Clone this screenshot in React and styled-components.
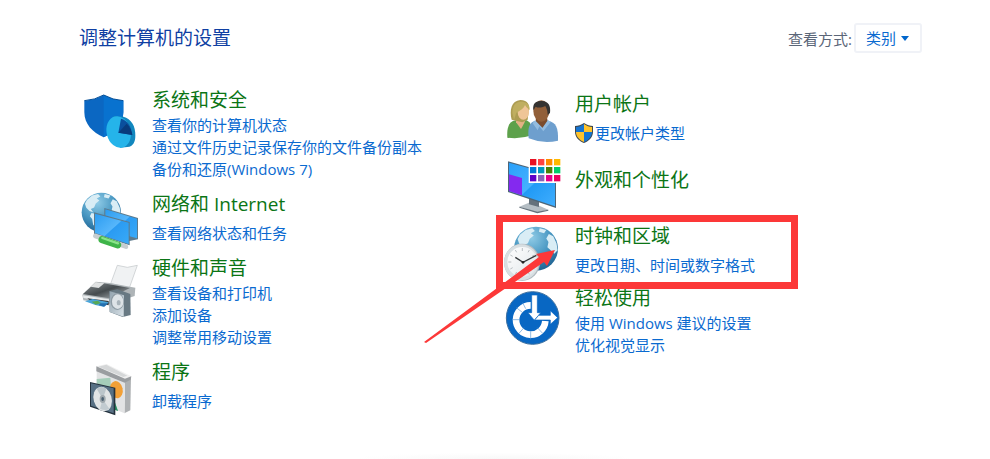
import React from 'react';
import styled, { createGlobalStyle } from 'styled-components';

const ShieldDiskIcon = () => (
  <Icon viewBox="27 3 180 198" aria-hidden="true">
    <path d="M43 47 Q75 45 101 30 Q128 45 160 47 V82 C160 118 134 142 101 157 C68 142 43 118 43 82Z" fill="#0b67c2" />
    <path d="M101 30 Q128 45 160 47 V82 C160 118 134 142 101 157Z" fill="#0872cf" />
    <path d="M43 47 Q75 45 101 30 Q128 45 160 47" fill="none" stroke="#075098" strokeWidth="3" />
    <path d="M130 93 L160 95 C184 102 197 122 196 152 C196 170 190 184 172 186 L150 188Z" fill="#1287be" />
    <ellipse cx="146" cy="141" rx="36" ry="48" transform="rotate(-14 146 141)" fill="#25b4ea" />
    <path d="M145 143 L153 101 C172 106 183 122 187 150Z" fill="#0a4f9d" />
    <path d="M145 143 L170 116 C180 126 185 138 187 150Z" fill="#083b7c" />
  </Icon>
);

const Globe = ({ cx, cy, r, id }) => (
  <g>
    <defs>
      <radialGradient id={id} cx="0.4" cy="0.25" r="0.8">
        <stop offset="0" stopColor="#8fcbe6" />
        <stop offset="0.55" stopColor="#4796c1" />
        <stop offset="1" stopColor="#1c5f8f" />
      </radialGradient>
    </defs>
    <circle cx={cx} cy={cy} r={r} fill={`url(#${id})`} />
    <g transform={`translate(${cx} ${cy}) scale(${r / 60})`} fill="#d9edf5">
      <path d="M-44 -38 L-28 -51 L-10 -56 L-3 -48 L-14 -42 L-6 -36 L-17 -27 L-22 -15 L-32 -10 L-25 0 L-36 -4 L-46 -14 L-50 -26Z" />
      <path d="M-30 2 L-12 6 L-3 16 L-12 28 L-18 45 L-25 38 L-28 20 L-35 12Z" />
      <path d="M10 -56 L28 -51 L22 -42 L8 -46Z" />
      <path d="M35 -40 L47 -34 L56 -15 L59 4 L50 14 L40 4 L31 -4 L34 -18 L28 -28Z" />
    </g>
  </g>
);

const NetworkIcon = () => (
  <Icon viewBox="27 15 180 198" aria-hidden="true">
    <defs>
      <linearGradient id="netScreen" x1="0" y1="0" x2="1" y2="1">
        <stop offset="0" stopColor="#2b9cf0" />
        <stop offset="0.5" stopColor="#56b6fb" />
        <stop offset="0.52" stopColor="#2b9bf2" />
        <stop offset="1" stopColor="#38aaf8" />
      </linearGradient>
    </defs>
    <Globe cx={94} cy={82} r={59} id="netGlobe" />
    <path d="M103 69 L204 99 V163 L178 168 L103 144Z" fill="#5c7a8c" />
    <path d="M106 73 L201 101 V160 L106 134Z" fill="url(#netScreen)" />
    <path d="M72 82 L179 111 V181 L72 146Z" fill="#5c7a8c" />
    <path d="M75 86 L176 113 V177 L75 144Z" fill="url(#netScreen)" />
    <path d="M76 153 L168 185" stroke="#c6cdd0" strokeWidth="14" strokeLinecap="round" />
    <path d="M96 164 L143 180" stroke="#3fb449" strokeWidth="21" strokeLinecap="round" />
    <path d="M97 159 L144 175" stroke="#8ae389" strokeWidth="7" strokeLinecap="round" />
  </Icon>
);

const PrinterIcon = () => (
  <Icon viewBox="27 -3 180 198" aria-hidden="true">
    <defs>
      <linearGradient id="printerTop" x1="0" y1="0" x2="1" y2="1">
        <stop offset="0" stopColor="#8d9496" />
        <stop offset="0.5" stopColor="#454b4e" />
        <stop offset="1" stopColor="#b7bdc0" />
      </linearGradient>
      <linearGradient id="speakerFace" x1="0" y1="0" x2="1" y2="1">
        <stop offset="0" stopColor="#93a4af" />
        <stop offset="1" stopColor="#d9e2e8" />
      </linearGradient>
    </defs>
    <path d="M142 31 L172 37 L202 31 L178 99 L122 86Z" fill="#f0f2f3" stroke="#bfc4c7" strokeWidth="2" />
    <path d="M37 119 L77 80 L120 84 L196 98 L194 123 L120 148 L40 136Z" fill="#aeb4b7" />
    <path d="M39 117 L79 81 L180 99 L117 130Z" fill="url(#printerTop)" />
    <path d="M62 95 L77 81 L103 85 L86 99Z" fill="#e0e2e2" />
    <path d="M39 121 L117 133 V141 L40 129Z" fill="#e8ebec" />
    <path d="M52 130 L116 138 V151 L65 140Z" fill="#33383b" />
    <path d="M45 139 L68 132 L116 142 L101 155 L76 150Z" fill="#4aa4d8" />
    <path d="M65 140 L83 137 L93 144 L77 149Z" fill="#58a955" />
    <path d="M90 145 L115 145 L103 155 L87 151Z" fill="#256fae" />
    <path d="M118 108 L142 103 L181 117 L182 180 L158 186 L119 171Z" fill="#687983" />
    <path d="M119 109 L162 121 L161 185 L119 171Z" fill="url(#speakerFace)" />
    <ellipse cx="142" cy="140" rx="20" ry="25" fill="#8d9ba4" />
    <ellipse cx="143" cy="140" rx="17" ry="22" fill="#dde3e7" />
    <ellipse cx="146" cy="143" rx="6" ry="8" fill="#a9b4bb" />
  </Icon>
);

const ProgramsIcon = () => (
  <Icon viewBox="27 9 180 198" aria-hidden="true">
    <path d="M165 78 L183 66 L181 166 L163 175Z" fill="#aeb1b3" />
    <path d="M80 43 L165 75 L164 175 L80 142Z" fill="#e2e3e4" />
    <path d="M80 72 L121 68 L124 110 L144 168 L120 158 L80 130Z" fill="#a5cdb9" />
    <path d="M134 140 L144 168 L134 164Z" fill="#289361" />
    <ellipse cx="139" cy="104" rx="19" ry="26" transform="rotate(-12 139 104)" fill="#f2a037" />
    <path d="M79 34 L110 27 L184 64 L165 77Z" fill="#f0f0f0" />
    <path d="M79 34 L165 71 L184 64 L182 74 L164 83 L79 49Z" fill="#9a9da0" />
    <path d="M85 35 L109 29 L172 62 L160 66Z" fill="#d5d7d8" />
    <path d="M60 81 L136 98 V181 L60 155Z" fill="#24313c" />
    <path d="M63 85 L131 100 V175 L63 152Z" fill="#577084" />
    <ellipse cx="98" cy="132" rx="27" ry="37" transform="rotate(-16 98 132)" fill="#e1e4e5" />
    <path d="M98 132 L80 101 Q94 91 109 101Z" fill="#bbc5ca" />
    <path d="M98 132 L118 161 Q107 169 90 161Z" fill="#c2cbd0" />
    <ellipse cx="98" cy="132" rx="9" ry="12" fill="#9fa8ad" />
    <ellipse cx="98" cy="132" rx="4" ry="6" fill="#4c6172" />
  </Icon>
);

const UsersIcon = () => (
  <Icon viewBox="21 15 180 198" aria-hidden="true">
    <path d="M37 158 C35 125 42 110 62 106 L95 106 C108 113 112 125 112 151 Q75 163 37 158Z" fill="#5da14b" />
    <path d="M64 102 L92 102 L88 114 L78 132 L63 112Z" fill="#e3b184" />
    <path d="M50 104 C43 76 49 47 76 45 C99 45 106 61 101 79 L98 104 L82 112Z" fill="#ad9c52" />
    <ellipse cx="85" cy="81" rx="17" ry="23" fill="#efc597" />
    <path d="M64 83 C75 77 86 71 90 60 C95 70 101 72 104 75 C105 54 89 49 76 50 C61 51 53 62 52 83 L57 105Z" fill="#bfae60" />
    <path d="M101 160 C97 126 104 110 123 107 H158 C184 112 190 127 189 167 Q145 178 101 160Z" fill="#6e9fce" />
    <path d="M123 98 H156 L158 109 L144 130 L122 109Z" fill="#7b4c2d" />
    <path d="M120 106 L142 129 L159 105 L167 111 L145 139 L133 124 L128 136 L113 115Z" fill="#93bce0" />
    <ellipse cx="139" cy="78" rx="24" ry="32" fill="#925f39" />
    <path d="M115 76 C112 55 122 48 141 48 C160 49 168 62 165 84 L158 90 C158 74 153 68 151 63 C137 70 126 68 122 65Z" fill="#353331" />
  </Icon>
);

const tiles = [
  ['#e81123', '#ff4343', '#ff8c00', '#ffb900'],
  ['#0078d7', '#0099bc', '#498205', '#00cc6a'],
  ['#5c00c7', '#8764b8', '#e3008c', '#ea005e'],
];

const AppearanceIcon = () => (
  <Icon viewBox="21 201 180 198" aria-hidden="true">
    <defs>
      <linearGradient id="deskScreen" x1="0" y1="0" x2="1" y2="1">
        <stop offset="0" stopColor="#29a0fa" />
        <stop offset="0.5" stopColor="#45b1ff" />
        <stop offset="0.52" stopColor="#219af5" />
        <stop offset="1" stopColor="#40aefe" />
      </linearGradient>
    </defs>
    <path d="M73 365 L107 351 L160 374 L127 383Z" fill="#b5bec4" />
    <path d="M73 365 L127 380 L160 374 V377 L127 385 L73 368Z" fill="#65717b" />
    <path d="M102 335 L132 345 V366 L102 358Z" fill="#65717b" />
    <path d="M39 229 L183 269 V369 L39 321Z" fill="#4d6577" />
    <path d="M42 233 L180 271 V364 L42 318Z" fill="url(#deskScreen)" />
    <path d="M42 268 L81 279 V331 L42 318Z" fill="#8429ef" />
    <path d="M101 218 H200 V294 H101Z" fill="#fff" />
    {tiles.map((row, y) =>
      row.map((color, x) => (
        <rect key={color} x={105 + x * 24} y={222 + y * 24} width="19" height="19" fill={color} />
      ))
    )}
  </Icon>
);

const ClockIcon = () => (
  <Icon viewBox="36 51 180 198" aria-hidden="true">
    <defs>
      <linearGradient id="clockFace" x1="0" y1="0" x2="1" y2="1">
        <stop offset="0" stopColor="#ffffff" />
        <stop offset="1" stopColor="#dfe5e8" />
      </linearGradient>
    </defs>
    <Globe cx={138} cy={131} r={66} id="clockGlobe" />
    <ellipse cx="96" cy="172" rx="54" ry="56" fill="#b1bbc0" />
    <ellipse cx="94" cy="172" rx="52" ry="54" fill="#d8dfe2" />
    <circle cx="97" cy="171" r="45" fill="url(#clockFace)" />
    <g stroke="#9aa3a8" strokeWidth="2">
      <path d="M97 129 V138 M97 205 V214 M55 171 H64 M130 171 H139" />
      <path d="M76 135 L80 142 M118 135 L114 142 M61 150 L68 154 M133 150 L126 154" />
      <path d="M61 192 L68 188 M133 192 L126 188 M76 208 L80 201 M118 208 L114 201" />
    </g>
    <path d="M76 157 L99 172 L139 151" fill="none" stroke="#34393c" strokeWidth="4" />
    <circle cx="99" cy="172" r="4" fill="#222" />
  </Icon>
);

const EaseIcon = () => (
  <Icon viewBox="261 132 180 198" aria-hidden="true">
    <circle cx="353" cy="234" r="79" fill="#0867c3" stroke="#3b6e9e" strokeWidth="3" />
    <path d="M347 196 A44 44 0 1 0 391 243" fill="none" stroke="#fff" strokeWidth="20" />
    <path
      d="M347 274 V298 M291 239 H314 M304 203 L322 217 M312 280 L327 263 M367 263 L383 280 M323 188 L332 206"
      stroke="#5c99d5"
      strokeWidth="2"
    />
    <path
      d="M350 165 H367 V218 H377 L358 241 L339 218 H350Z"
      fill="#fff"
      stroke="#0867c3"
      strokeWidth="2"
    />
    <path d="M371 226 H406 V212 L428 233 L406 253 V240 H359Z" fill="#fff" stroke="#0867c3" strokeWidth="2" />
  </Icon>
);

const AdminShield = () => (
  <svg width="18" height="20" viewBox="0 0 18 20" aria-hidden="true">
    <path d="M9 0 C6 2 3 3 0 3 V9 C0 14 4 18 9 20 C14 18 18 14 18 9 V3 C15 3 12 2 9 0Z" fill="#3d4850" />
    <path d="M9 1 V9 H1 V4 C4 4 6 3 9 1Z" fill="#1674d1" />
    <path d="M9 1 C12 3 14 4 17 4 V9 H9Z" fill="#ffc32b" />
    <path d="M1 9 H9 V19 C4 17 1 13 1 9Z" fill="#ffc32b" />
    <path d="M9 9 H17 C17 13 14 17 9 19Z" fill="#1674d1" />
  </svg>
);

const leftCategories = [
  {
    title: '系统和安全',
    icon: ShieldDiskIcon,
    links: ['查看你的计算机状态', '通过文件历史记录保存你的文件备份副本', '备份和还原(Windows 7)'],
  },
  { title: '网络和 Internet', icon: NetworkIcon, links: ['查看网络状态和任务'] },
  { title: '硬件和声音', icon: PrinterIcon, links: ['查看设备和打印机', '添加设备', '调整常用移动设置'] },
  { title: '程序', icon: ProgramsIcon, links: ['卸载程序'] },
];

const rightCategories = [
  { title: '用户帐户', icon: UsersIcon, links: ['更改帐户类型'], admin: true },
  { title: '外观和个性化', icon: AppearanceIcon, links: [] },
  { title: '时钟和区域', icon: ClockIcon, links: ['更改日期、时间或数字格式'], marked: true },
  { title: '轻松使用', icon: EaseIcon, links: ['使用 Windows 建议的设置', '优化视觉显示'] },
];

const Category = ({ title, icon: CategoryIcon, links, admin, marked }) => (
  <Row $marked={marked}>
    <CategoryIcon />
    <Details $centered={links.length === 0}>
      <Heading>
        <a href="#">{title}</a>
      </Heading>
      {links.length > 0 && (
        <Links $spaced={links.length === 1}>
          {links.map((link) => (
            <li key={link}>
              <TaskLink href="#">
                {admin && <AdminShield />}
                {link}
              </TaskLink>
            </li>
          ))}
        </Links>
      )}
    </Details>
    {marked && (
      <>
        <Frame />
        <Arrow viewBox="0 0 132 96" aria-hidden="true">
          <path d="M2 93 L0 92 L115 7 L112 4 L131 0 L123 16 L120 12Z" fill="#fc3838" />
        </Arrow>
      </>
    )}
  </Row>
);

const App = () => (
  <Page>
    <GlobalStyle />
    <Header>
      <Title>调整计算机的设置</Title>
      <ViewBy>
        <label htmlFor="view">查看方式:</label>
        <SelectBox>
          <select id="view" defaultValue="类别">
            <option>类别</option>
          </select>
          <svg width="8" height="5" viewBox="0 0 8 5" aria-hidden="true">
            <path d="M0 0 H8 L4 5Z" fill="#0066cc" />
          </svg>
        </SelectBox>
      </ViewBy>
    </Header>
    <Columns>
      <Column $gap="10px">
        {leftCategories.map((category) => (
          <Category key={category.title} {...category} />
        ))}
      </Column>
      <Column $gap="8px" $lowered>
        {rightCategories.map((category) => (
          <Category key={category.title} {...category} />
        ))}
      </Column>
    </Columns>
    <BottomShade />
  </Page>
);

const GlobalStyle = createGlobalStyle`
  * {
    box-sizing: border-box;
  }

  body {
    margin: 0;
    background: #fff;
    font-family: 'Open Sans', 'Noto Sans CJK SC', sans-serif;
  }
`;

const Page = styled.div`
  display: flex;
  flex-direction: column;
  min-height: 100vh;
`;

const Header = styled.header`
  display: flex;
  align-items: center;
  justify-content: space-between;
  padding: 23px 68px 0 79px;
`;

const Title = styled.h1`
  margin: 0;
  font-size: 19px;
  line-height: 30px;
  font-weight: 400;
  color: #0f3fa3;
`;

const ViewBy = styled.div`
  display: flex;
  align-items: center;
  gap: 2px;
  font-size: 15px;
  color: #5b6678;
`;

const SelectBox = styled.div`
  display: grid;
  align-items: center;

  select {
    grid-area: 1 / 1;
    appearance: none;
    width: 68px;
    height: 30px;
    padding: 0 22px 0 10px;
    border: 2px solid #f0f2f7;
    border-radius: 3px;
    background: #fff;
    font-family: inherit;
    font-size: 15px;
    color: #0a6ad0;
  }

  svg {
    grid-area: 1 / 1;
    justify-self: end;
    margin-right: 13px;
    pointer-events: none;
  }
`;

const Columns = styled.main`
  display: grid;
  grid-template-columns: 1fr 1fr;
  column-gap: 3px;
  padding: 33px 68px 0 79px;
`;

const Column = styled.div`
  display: flex;
  flex-direction: column;
  gap: ${(props) => props.$gap};
  padding-top: ${(props) => (props.$lowered ? '4px' : '0')};
`;

const Row = styled.section`
  display: flex;
  align-items: flex-start;
  gap: 13px;
  position: ${(props) => (props.$marked ? 'relative' : 'static')};
`;

const Icon = styled.svg`
  flex: none;
  width: 60px;
  height: 66px;
  margin-bottom: -12px;
`;

const Details = styled.div`
  min-width: 0;
  padding: ${(props) => (props.$centered ? '14px 0 20px' : '0')};
`;

const Heading = styled.h2`
  margin: 0;
  font-size: 19px;
  line-height: 28px;
  font-weight: 400;

  a {
    color: #0b7515;
    text-decoration: none;
  }
`;

const Links = styled.ul`
  margin: 0;
  padding: ${(props) => (props.$spaced ? '4px 0 0' : '0')};
  list-style: none;
`;

const TaskLink = styled.a`
  display: flex;
  align-items: center;
  gap: 2px;
  font-size: 15px;
  line-height: 22px;
  white-space: pre;
  color: #0a6ad0;
  text-decoration: none;

  &:hover {
    text-decoration: underline;
  }
`;

const Frame = styled.div`
  position: absolute;
  top: -7px;
  left: -6px;
  width: 302px;
  height: 74px;
  border: 7px solid #fc3838;
  pointer-events: none;
`;

const Arrow = styled.svg`
  position: absolute;
  top: 28px;
  left: -78px;
  width: 132px;
  height: 96px;
  pointer-events: none;
`;

const BottomShade = styled.div`
  width: 270px;
  height: 6px;
  margin: auto auto 0;
  background: radial-gradient(ellipse at bottom, #f8f8f8, #fff 75%);
`;

export default App;
